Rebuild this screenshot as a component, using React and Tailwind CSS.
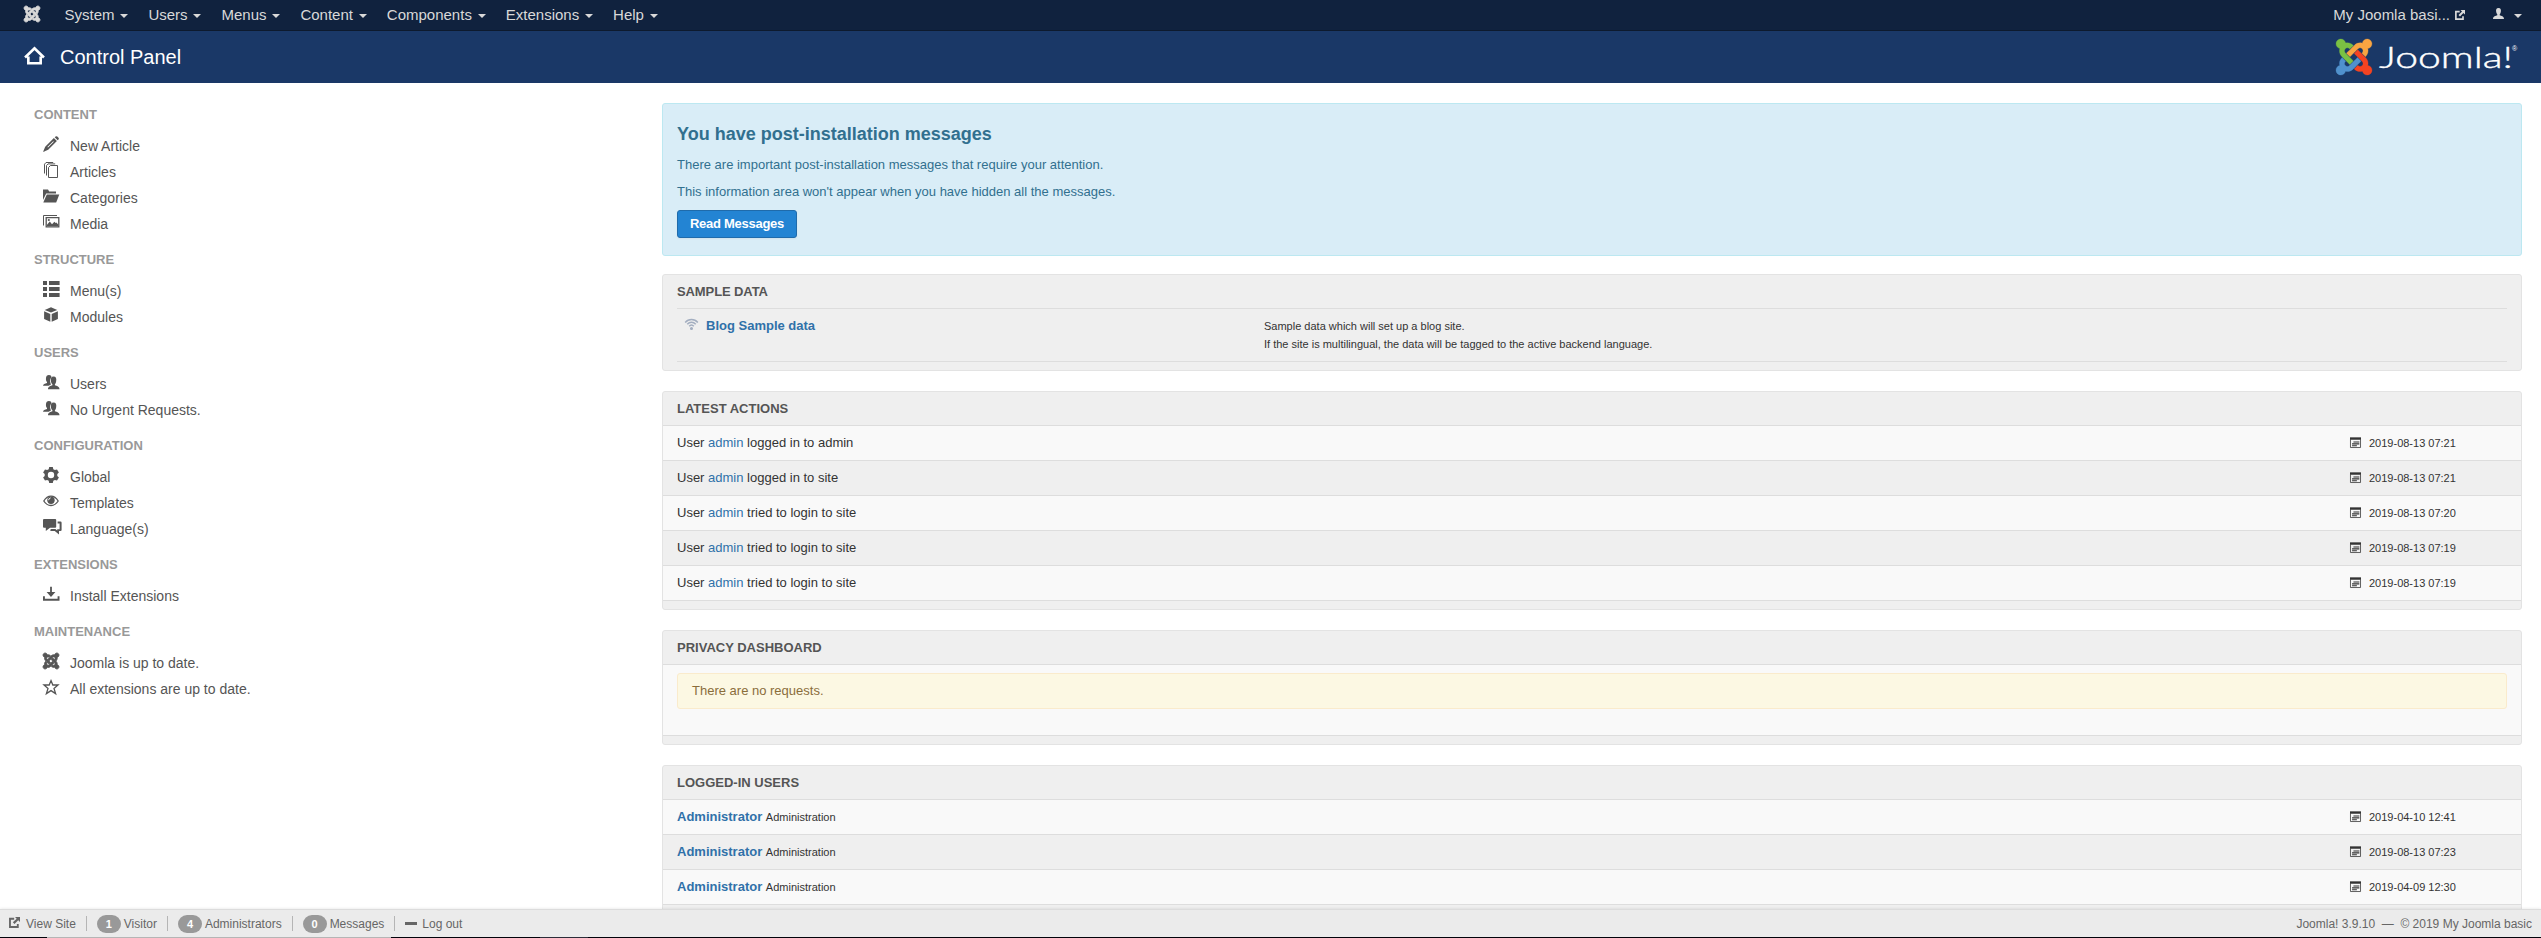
const joomlaParts = [
  ["#7ac143", "M.6 92.1C.6 58.8 27.4 32 60.4 32c30 0 54.5 21.9 59.2 50.2 32.6-7.6 67.1.6 96.5 30l-44.3 44.3c-20.5-20.5-42.6-16.3-55.4-3.5-14.3 14.3-14.3 37.9 0 52.2l99.5 99.5-44 44.3c-87.7-87.2-49.7-49.7-99.8-99.7-26.8-26.5-35-64.8-24.8-98.9C20.4 144.6.6 120.7.6 92.1z"],
  ["#f9a541", "M130.1 208.5l44.3 44.3c10-10 89.7-89.7 99.7-99.8 14.3-14.3 37.6-14.3 51.9 0 12.8 12.8 17 35-3.5 55.4l44 44.3c31.2-31.2 38.5-67.6 28.9-101.2 29.2-4.1 51.9-29.2 51.9-59.5 0-33.2-26.8-60.1-59.8-60.1-30.3 0-55.4 22.5-59.5 51.6-33.8-9.9-71.7-1.5-98.3 25.1-18.3 19.1-71.1 71.5-99.6 99.9z"],
  ["#f44321", "M396.4 360.7c8.2-32.7-.9-68.5-26.3-93.9-11.8-12.2 5 4.7-99.5-99.7l-44.3 44.3 99.7 99.7c14.3 14.3 14.3 37.6 0 51.9-12.8 12.8-35 17-55.4-3.5l-44 44.3c27.6 30.2 68 38.8 102.7 28 5.5 27.4 29.7 48.1 58.9 48.1 33 0 59.8-26.8 59.8-60.1 0-30.2-22.5-55-51.6-59.1z"],
  ["#5091cd", "M312.1 307.6l-44-44.3c-87 86.4-50.4 50.4-99.7 99.8-14.3 14.3-37.6 14.3-51.9 0-13.1-13.4-16.9-35.3 3.2-55.4l-44-44.3c-30.2 30.2-38 65.2-29.5 98.3-26.7 6-46.2 29.9-46.2 58.2C0 453.2 26.8 480 59.8 480c28.6 0 52.5-19.8 58.6-46.7 32.7 8.2 68.5-.6 94.2-26 32.1-32 12.2-12.4 99.5-99.7z"],
];

function JoomlaMark({ colored = false, className }) {
  return (
    <svg viewBox="0 32 448 448" className={`overflow-visible ${className}`} preserveAspectRatio="none">
      {joomlaParts.map(([color, d]) => (
        <path
          key={color}
          d={d}
          fill={colored ? color : "currentColor"}
          stroke={colored ? color : "currentColor"}
          strokeWidth={colored ? 4 : 22}
        />
      ))}
    </svg>
  );
}

const glyphs = {
  pencil: (
    <>
      <path fillRule="evenodd" d="M10.9 2.1 13.9 5.1 5.2 13.8 0 16 2.2 10.8ZM10.2 5.2 4.4 11 5 11.6 10.8 5.8Z" />
      <path d="M11.7 1.3 12.6.5Q13.4-.2 14.3.5L15.5 1.7Q16.3 2.6 15.5 3.4L14.7 4.3Z" />
    </>
  ),
  copy: (
    <g fill="none" stroke="currentColor" strokeWidth="1">
      <path d="M5.5 5.5 7.5 3.5H14.5V15.5H5.5Z" />
      <path d="M3.5 13.5V3.5L5 1.9H12.2" />
      <path d="M1.5 11.5V2.2L3 .5H10.2" />
    </g>
  ),
  folder: (
    <>
      <path d="M0 1.6H5L6.2 3.6H13V5.4H3.2L0 12Z" />
      <path d="M3.8 6.5H16.3L13.2 14.6H.3Z" />
    </>
  ),
  images: (
    <g transform="translate(0 1)">
      <path d="M.5 10.5V.5H14" fill="none" stroke="currentColor" />
      <path d="M3.2 2.7H15.8V11.8H3.2Z" fill="none" stroke="currentColor" strokeWidth="1.3" />
      <path d="M4 11.3V9.8L6.8 6.6 9 9.2 11.4 6.8 12.6 8 13.3 7.4 15.3 9.4V11.3Z" />
      <circle cx="5.8" cy="5" r="1.1" />
    </g>
  ),
  list: (
    <path d="M0 0H4V4H0ZM6 0H16.6V4H6ZM0 6H4V10H0ZM6 6H16.6V10H6ZM0 12H4V16H0ZM6 12H16.6V16H6Z" />
  ),
  cube: (
    <g transform="translate(0 .3)">
      <path d="M8 0 14.3 2.6 8 5.2 1.7 2.6Z" />
      <path d="M1.1 4 7.3 6.6V14.4L1.1 11.6Z" />
      <path d="M14.9 4 8.7 6.6V14.4L14.9 11.6Z" />
    </g>
  ),
  users: (
    <g transform="translate(0 1)">
      <path d="M5.9 0C8 0 8.6 1.4 8.4 2.4Q7 3.6 7 6L7.5 8.2 8 9.4 5.6 10.8H0C0 9.1 2 8.6 4 8V7C3 6.2 2.8 4.6 3 3Q3.2 0 5.9 0Z" />
      <path d="M10.5 1.4C13 1.4 13.6 3.4 13.2 5.8 13.1 7.6 12.5 8.7 11.9 9.2V10.3C13.8 11 16.5 11.6 16.5 14.2H5C5 11.6 7.6 11 9.4 10.3V9.2C8.7 8.6 8 7.6 7.9 6 7.6 3.4 8.3 1.4 10.5 1.4Z" />
    </g>
  ),
  cog: (
    <path fillRule="evenodd" d="M6.2 0H9.8L10.3 2.2 11.9 3.1 14 2.4 15.9 5.5 14.3 7V9L15.9 10.5 14 13.6 11.9 12.9 10.3 13.8 9.8 16H6.2L5.7 13.8 4.1 12.9 2 13.6.1 10.5 1.7 9V7L.1 5.5 2 2.4 4.1 3.1 5.7 2.2ZM8 4.8A3.2 3.2 0 1 0 8 11.2 3.2 3.2 0 1 0 8 4.8Z" />
  ),
  eye: (
    <>
      <path d="M.8 8C2.8 4.6 5.2 3.1 8 3.1S13.2 4.6 15.2 8C13.2 11.2 10.8 12.5 8 12.5S2.8 11.2.8 8Z" fill="none" stroke="currentColor" strokeWidth="1.3" />
      <circle cx="8" cy="7.3" r="3.7" />
      <path d="M5.6 7.2Q5.8 5.2 7.6 4.9" fill="none" stroke="#fff" strokeWidth="1" />
    </>
  ),
  comments: (
    <>
      <path d="M1 0H12.2Q13.2 0 13.2 1V7.8Q13.2 8.8 12.2 8.8H7L2.8 12V8.8H1Q0 8.8 0 7.8V1Q0 0 1 0Z" />
      <path d="M14.6 2.6H17.5Q18.6 2.6 18.6 3.7V11Q18.6 12 17.5 12H16V15.4L11.8 12H7.4V10.6L8.4 10H12.4L14.2 11.6V10.2H16.6V4.4H14.6Z" />
    </>
  ),
  download: (
    <g transform="translate(0 .7)">
      <path d="M7.1 0H8.9V5.2H12.4L8 10.2 3.6 5.2H7.1Z" />
      <path d="M0 9.6H1.9V12.1H14.6V9.6H16.5V14H0Z" />
    </g>
  ),
  star: (
    <path d="M8 1.6 9.8 6H15L11 9.4 12.6 14.6 8 11.6 3.4 14.6 5 9.4 1 6H6.2Z" fill="none" stroke="currentColor" strokeWidth="1.3" />
  ),
  home: (
    <path d="M.8 9.5 8 2.5 15.2 9.5M3.3 8.8V13.9H12.7V8.8" fill="none" stroke="currentColor" strokeWidth="2" />
  ),
  external: (
    <>
      <path d="M7.5 2.6H1.4V14.6H12.8V10" fill="none" stroke="currentColor" strokeWidth="2.7" />
      <path d="M8.8 0H16V7.2L13.4 4.7 8 10.2 5.6 7.8 11.2 2.4Z" />
    </>
  ),
  user: (
    <path d="M8 0C11 0 12 2.5 11.4 5.5 11.2 7 10.6 8.2 9.8 9V10.6C12 11.4 16 12 16 16H0C0 12 4 11.4 6.2 10.6V9C5.4 8.2 4.8 7 4.6 5.5 4 2.5 5 0 8 0Z" />
  ),
  wifi: (
    <g fill="none" stroke="currentColor" strokeWidth="1.8">
      <path d="M.2 5.6C4.4.6 11.6.6 15.8 5.6M2.8 7.8C5.8 4.4 10.2 4.4 13.2 7.8M5.2 10.2C7 8 9 8 10.8 10.2" />
      <circle cx="8" cy="13" r="1" fill="currentColor" />
    </g>
  ),
  calendar: (
    <>
      <path d="M0 .5H16V4H0Z" />
      <path d="M.7 3.5V15.3H15.3V3.5" fill="none" stroke="currentColor" strokeWidth="1.4" opacity=".8" />
      <path d="M5 7.2H13.6M3 10H13.6M3 12.8H10" stroke="currentColor" strokeWidth="1.6" />
    </>
  ),
};

function Icon({ name, className = "size-4" }) {
  return (
    <svg viewBox="0 0 16 16" fill="currentColor" className={`shrink-0 overflow-visible ${className}`}>
      {glyphs[name]}
    </svg>
  );
}

function Caret() {
  return (
    <svg viewBox="0 0 8 4" className="mt-px h-1 w-2 shrink-0" fill="currentColor">
      <path d="M0 0H8L4 4Z" />
    </svg>
  );
}

const navItems = ["System", "Users", "Menus", "Content", "Components", "Extensions", "Help"];

const sidebar = [
  ["Content", [["pencil", "New Article"], ["copy", "Articles"], ["folder", "Categories"], ["images", "Media"]]],
  ["Structure", [["list", "Menu(s)"], ["cube", "Modules"]]],
  ["Users", [["users", "Users"], ["users", "No Urgent Requests."]]],
  ["Configuration", [["cog", "Global"], ["eye", "Templates"], ["comments", "Language(s)"]]],
  ["Extensions", [["download", "Install Extensions"]]],
  ["Maintenance", [["joomla", "Joomla is up to date."], ["star", "All extensions are up to date."]]],
];

const actions = [
  ["logged in to admin", "2019-08-13 07:21"],
  ["logged in to site", "2019-08-13 07:21"],
  ["tried to login to site", "2019-08-13 07:20"],
  ["tried to login to site", "2019-08-13 07:19"],
  ["tried to login to site", "2019-08-13 07:19"],
];

const logins = ["2019-04-10 12:41", "2019-08-13 07:23", "2019-04-09 12:30"];

function Panel({ title, children }) {
  return (
    <section className="mb-5 rounded-[3px] border border-[#e3e3e3] bg-[#efefef]">
      <h2 className="h-[33px] px-[14px] pt-2 text-[13px] leading-[18px] font-bold text-[#555] uppercase">{title}</h2>
      {children}
      <div className="h-[9px] border-t border-[#ddd]" />
    </section>
  );
}

function Row({ date, children }) {
  return (
    <div className="flex h-[35px] items-center border-t border-[#ddd] px-[14px] odd:bg-[#efefef] even:bg-[#f9f9f9]">
      <div className="grow pb-px">{children}</div>
      <div className="flex w-[157px] items-center gap-2 text-[11px]">
        <Icon name="calendar" className="-mt-0.5 size-[11px]" />
        {date}
      </div>
    </div>
  );
}

function Badge({ children }) {
  return (
    <span className="flex h-[18px] w-6 items-center justify-center rounded-full bg-[#999] text-[11px] font-bold text-white">
      {children}
    </span>
  );
}

function Separator() {
  return <span className="mr-[10px] ml-[10px] h-[15px] w-px bg-[#b5b5b5]" />;
}

export default function App() {
  return (
    <div className="flex h-[938px] w-[2541px] flex-col overflow-hidden bg-white font-['Liberation_Sans',Arial,sans-serif] text-[13px] leading-[18px] text-[#333]">
      <nav className="flex h-[31px] shrink-0 items-center border-b border-[#0d1a2e] bg-[#10223e] pr-[19px] pl-6 text-[15px] text-[#d9d9d9]">
        <JoomlaMark className="mt-[-2px] mr-[24.5px] size-4" />
        {navItems.map((item) => (
          <span key={item} className="mr-5 flex items-center gap-[5.9px]">
            {item}
            <Caret />
          </span>
        ))}
        <span className="ml-auto flex items-center gap-[5px]">
          My Joomla basi...
          <Icon name="external" className="size-[10px]" />
        </span>
        <span className="ml-[28px] flex items-center gap-[10px]">
          <Icon name="user" className="-mt-1 size-[11px]" />
          <Caret />
        </span>
      </nav>

      <header className="flex h-[52px] shrink-0 items-center bg-[#1a3867] pr-6 pl-6 text-white">
        <Icon name="home" className="-mt-1 mr-[15px] size-[21px]" />
        <h1 className="text-[20px]">Control Panel</h1>
        <div className="ml-auto flex items-center">
          <JoomlaMark colored className="size-9" />
          <svg width="139" height="36" className="ml-[6px] overflow-visible" fill="#fff">
            <text x="1" y="29" fontFamily="Lato" fontWeight="300" fontSize="30" stroke="#fff" strokeWidth="0.4" textLength="134" lengthAdjust="spacingAndGlyphs">Joomla!</text>
            <text x="134" y="12" fontFamily="Liberation Sans" fontSize="7">®</text>
          </svg>
        </div>
      </header>

      <div className="flex min-h-0 grow overflow-hidden">
        <aside className="w-[662px] shrink-0 pt-[22px] pl-[34px]">
          {sidebar.map(([title, items]) => (
            <section key={title} className="mb-[13px]">
              <h2 className="mb-[9px] h-[19px] text-[13px] leading-[19px] font-bold text-[#999] uppercase">{title}</h2>
              {items.map(([icon, label]) => (
                <div key={label} className="flex h-[26px] items-center pl-[9px] text-[14px] text-[#555]">
                  <span className="mt-[-5px] mr-[11px] flex w-4">
                    {icon === "joomla" ? <JoomlaMark className="size-4" /> : <Icon name={icon} />}
                  </span>
                  {label}
                </div>
              ))}
            </section>
          ))}
        </aside>

        <main className="w-[1860px] shrink-0 pt-5">
          <section className="mb-[18px] h-[153px] rounded-[3px] border border-[#bce8f1] bg-[#d9edf7] px-[14px] pt-5 text-[#31708f]">
            <h2 className="text-[18px] leading-5 font-bold">You have post-installation messages</h2>
            <p className="mt-3">There are important post-installation messages that require your attention.</p>
            <p className="mt-[9px]">This information area won't appear when you have hidden all the messages.</p>
            <button className="mt-[9px] flex h-7 w-[120px] items-center justify-center rounded-[3px] border border-[#1f6bab] bg-[#2384d3] pb-px text-[13px] font-bold tracking-[-0.27px] text-white shadow-[0_1px_2px_rgba(0,0,0,0.05)]">
              Read Messages
            </button>
          </section>

          <section className="mb-5 h-[97px] rounded-[3px] border border-[#e3e3e3] bg-[#efefef] px-[14px]">
            <h2 className="h-[33px] pt-2 text-[13px] leading-[18px] font-bold tracking-[-0.1px] text-[#555] uppercase">Sample Data</h2>
            <div className="flex h-[54px] border-y border-[#ddd] pt-2">
              <div className="flex w-[587px] pl-2">
                <Icon name="wifi" className="mt-px mr-2 size-[13px] text-[#a3aec0]" />
                <a className="font-bold text-[#3071a9]">Blog Sample data</a>
              </div>
              <p className="text-[11px]">
                Sample data which will set up a blog site.
                <br />
                If the site is multilingual, the data will be tagged to the active backend language.
              </p>
            </div>
          </section>

          <Panel title="Latest Actions">
            {actions.map(([text, date], i) => (
              <Row key={i} date={date}>
                User <a className="text-[#3071a9]">admin</a> {text}
              </Row>
            ))}
          </Panel>

          <Panel title="Privacy Dashboard">
            <div className="h-[71px] border-t border-[#ddd] bg-[#f9f9f9] px-[14px] pt-2">
              <div className="h-9 rounded-[3px] border border-[#faebcc] bg-[#fcf8e3] px-[14px] py-2 text-[#8a6d3b]">
                There are no requests.
              </div>
            </div>
          </Panel>

          <Panel title="Logged-in Users">
            {logins.map((date) => (
              <Row key={date} date={date}>
                <a className="font-bold text-[#3071a9]">Administrator</a> <span className="text-[11px]">Administration</span>
              </Row>
            ))}
          </Panel>
        </main>
      </div>

      <footer className="flex h-7 shrink-0 items-center border-t border-[#dcdcdc] bg-[#ebebeb] pr-[9px] pl-[9px] text-[12px] text-[#666] shadow-[0_0_3px_rgba(0,0,0,0.12)]">
        <Icon name="external" className="-mt-0.5 mr-[6px] size-[11px]" />
        View Site
        <Separator />
        <Badge>1</Badge>
        <span className="ml-[3px]">Visitor</span>
        <Separator />
        <Badge>4</Badge>
        <span className="ml-[3px]">Administrators</span>
        <Separator />
        <Badge>0</Badge>
        <span className="ml-[3px]">Messages</span>
        <Separator />
        <span className="mr-[5px] h-[3px] w-3 bg-[#666]" />
        Log out
        <span className="ml-auto whitespace-pre">{"Joomla! 3.9.10 \u00a0—\u00a0 © 2019 My Joomla basic"}</span>
      </footer>
      <div className="flex h-px shrink-0 bg-[#02020a]">
        <div className="ml-[47px] w-[344px] bg-[#b5b5b5]" />
        <div className="ml-[149px] w-12 bg-[#2c2c38]" />
      </div>
    </div>
  );
}
